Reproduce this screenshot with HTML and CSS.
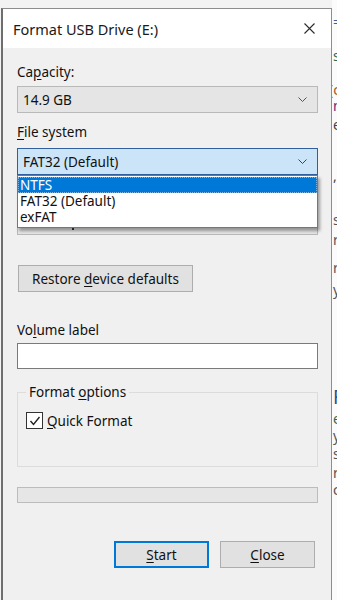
FILE: index.html
```html
<!DOCTYPE html>
<html>
<head>
<meta charset="utf-8">
<link rel="stylesheet" href="styles.css">
</head>
<body>
<div class="screen">
  <div class="dialog">
    <div class="titlebar">
      <span class="title">Format USB Drive (E:)</span>
      <svg class="close-x" width="11" height="11" viewBox="0 0 11 11"><path d="M0.5 0.5 L10.5 10.5 M10.5 0.5 L0.5 10.5" stroke="#2b2b2b" stroke-width="1.1" fill="none"/></svg>
    </div>
    <div class="content">
      <div class="label lbl-cap">Ca<u>p</u>acity:</div>
      <div class="select sel-cap"><span>14.9 GB</span><svg class="chev" width="9" height="5" viewBox="0 0 9 5"><path d="M0.5 0.5 L4.5 4.5 L8.5 0.5" stroke="#555" stroke-width="1" fill="none"/></svg></div>
      <div class="label lbl-fs"><u>F</u>ile system</div>
      <div class="fs-wrap">
        <div class="select sel-fs"><span>FAT32 (Default)</span><svg class="chev" width="9" height="5" viewBox="0 0 9 5"><path d="M0.5 0.5 L4.5 4.5 L8.5 0.5" stroke="#444" stroke-width="1" fill="none"/></svg></div>
        <ul class="droplist">
          <li class="opt active">NTFS</li>
          <li class="opt">FAT32 (Default)</li>
          <li class="opt">exFAT</li>
        </ul>
      </div>
      <div class="label lbl-alloc"></div>
      <div class="select sel-alloc"><span class="dot"></span></div>
      <button class="btn restore">Restore <u>d</u>evice defaults</button>
      <div class="label lbl-vol">Vo<u>l</u>ume label</div>
      <div class="input"></div>
      <div class="group">
        <span class="legend">Format <u>o</u>ptions</span>
        <div class="check-row">
          <span class="checkbox"><svg width="12" height="12" viewBox="0 0 12 12"><path d="M1.5 6 L4.5 9.5 L10.5 2" stroke="#222" stroke-width="1.4" fill="none"/></svg></span>
          <span><u>Q</u>uick Format</span>
        </div>
      </div>
      <div class="progress"></div>
      <div class="actions">
        <button class="btn action primary"><u>S</u>tart</button>
        <button class="btn action"><u>C</u>lose</button>
      </div>
    </div>
  </div>
  <div class="behind">
    <span class="b1">=</span>
    <span class="b2">s</span>
    <span class="b3">(c</span>
    <span class="b4">n</span>
    <span class="b5">e</span>
    <span class="b6">,</span>
    <span class="b7">s</span>
    <span class="b8">r</span>
    <span class="b9">r</span>
    <span class="b10">y</span>
    <span class="b11">F</span>
    <span class="b12">e</span>
    <span class="b13">y</span>
    <span class="b14">s</span>
    <span class="b15">r</span>
    <span class="b16">c</span>
  </div>
</div>
</body>
</html>
```

FILE: styles.css
```css
html, body {
  margin: 0;
  padding: 0;
}
body {
  background: #f3f3f3;
  font-family: "Noto Sans", "Open Sans", sans-serif;
  font-size: 13.5px;
  color: #111;
  width: 337px;
  height: 600px;
  overflow: hidden;
}
u {
  text-decoration: underline;
  text-underline-offset: 2px;
}
.screen {
  display: flex;
  height: 600px;
}
.dialog {
  margin: 8px 0 0 1px;
  width: 328px;
  flex: none;
  border-left: 2px solid #6e6e6e;
  border-top: 1px solid #8d8d8d;
  border-right: 1px solid #8d8d8d;
  background: #f0f0f0;
  display: flex;
  flex-direction: column;
}
.titlebar {
  height: 39px;
  background: #ffffff;
  display: flex;
  align-items: center;
  justify-content: space-between;
  padding: 0 16px 0 10px;
}
.title {
  font-size: 14.5px;
  color: #1a1a1a;
}
.close-x {
  display: block;
}
.content {
  padding: 0 13px 0 14px;
  display: flex;
  flex-direction: column;
}
.label {
  line-height: 16px;
  height: 16px;
  white-space: nowrap;
}
.lbl-cap { margin-top: 16px; }
.select {
  height: 27px;
  box-sizing: border-box;
  display: flex;
  align-items: center;
  justify-content: space-between;
  padding: 0 10px 0 5px;
}
.sel-cap {
  margin-top: 6px;
  background: #e5e5e5;
  border: 1px solid #b9b9b9;
}
.lbl-fs { margin-top: 11px; }
.fs-wrap {
  position: relative;
  margin-top: 8px;
}
.sel-fs {
  background: #cce4f7;
  border: 1px solid #2f5f9e;
}
.droplist {
  position: absolute;
  left: 0;
  right: 0;
  top: 100%;
  margin: 0;
  padding: 1px 0 2px 0;
  list-style: none;
  background: #ffffff;
  border: 1px solid #5a7aa8;
  box-shadow: 2px 3px 3px rgba(0,0,0,0.35);
  z-index: 5;
}
.opt {
  height: 16px;
  line-height: 16px;
  padding-left: 2px;
  color: #111;
}
.opt.active {
  background: #0078d7;
  color: #ffffff;
  outline: 1px dotted #7fb4e6;
  outline-offset: -1px;
}
.lbl-alloc { margin-top: 9px; }
.sel-alloc {
  margin-top: 8px;
  background: #e5e5e5;
  border: 1px solid #b9b9b9;
  align-items: flex-end;
}
.dot {
  display: block;
  width: 2px;
  height: 2px;
  margin: 0 0 4px 49px;
  background: #333;
}
.btn {
  font-family: inherit;
  font-size: 13.5px;
  color: #111;
  background: #e1e1e1;
  border: 1px solid #adadad;
  height: 27px;
  padding: 0;
  box-sizing: border-box;
}
.restore {
  margin-top: 30px;
  margin-left: 1px;
  width: 175px;
  align-self: flex-start;
}
.lbl-vol { margin-top: 30px; }
.input {
  margin-top: 5px;
  height: 26px;
  box-sizing: border-box;
  background: #ffffff;
  border: 1px solid #7a7a7a;
}
.group {
  position: relative;
  margin-top: 23px;
  height: 75px;
  box-sizing: border-box;
  border: 1px solid #dcdcdc;
  padding: 19px 0 0 8px;
}
.legend {
  position: absolute;
  top: -9px;
  left: 8px;
  padding: 0 3px;
  line-height: 16px;
  background: #f0f0f0;
}
.check-row {
  display: flex;
  align-items: center;
  gap: 4px;
  height: 17px;
}
.checkbox {
  width: 17px;
  height: 17px;
  box-sizing: border-box;
  border: 1.5px solid #333;
  background: #ffffff;
  display: flex;
  align-items: center;
  justify-content: center;
}
.checkbox svg { display: block; }
.progress {
  margin-top: 20px;
  height: 16px;
  box-sizing: border-box;
  background: #e6e6e6;
  border: 1px solid #bcbcbc;
}
.actions {
  margin-top: 38px;
  display: flex;
  justify-content: flex-end;
  gap: 11px;
  padding-right: 3px;
}
.action {
  width: 95px;
}
.primary {
  border: 2px solid #0078d7;
}
.behind {
  flex: 1;
  position: relative;
  background: #fbfbfb;
  overflow: hidden;
  font-size: 14px;
}
.behind span {
  position: absolute;
  left: 1px;
  line-height: 12px;
}
.b1 { top: 16px; color: #3a5fa0; }
.b2 { top: 50px; color: #2f6b4f; }
.b3 { top: 84px; color: #9a5a2a; left: -3px !important; }
.b4 { top: 100px; color: #6a2a7a; }
.b5 { top: 119px; color: #444; }
.b6 { top: 170px; color: #444; }
.b7 { top: 214px; color: #555; }
.b8 { top: 234px; color: #555; }
.b9 { top: 262px; color: #555; }
.b10 { top: 284px; color: #555; }
.b11 { top: 388px; color: #2f4f8f; font-size: 19px; line-height: 18px !important; }
.b12 { top: 413px; color: #2f6b4f; }
.b13 { top: 430px; color: #555; }
.b14 { top: 448px; color: #555; }
.b15 { top: 467px; color: #555; }
.b16 { top: 484px; color: #555; }
```
